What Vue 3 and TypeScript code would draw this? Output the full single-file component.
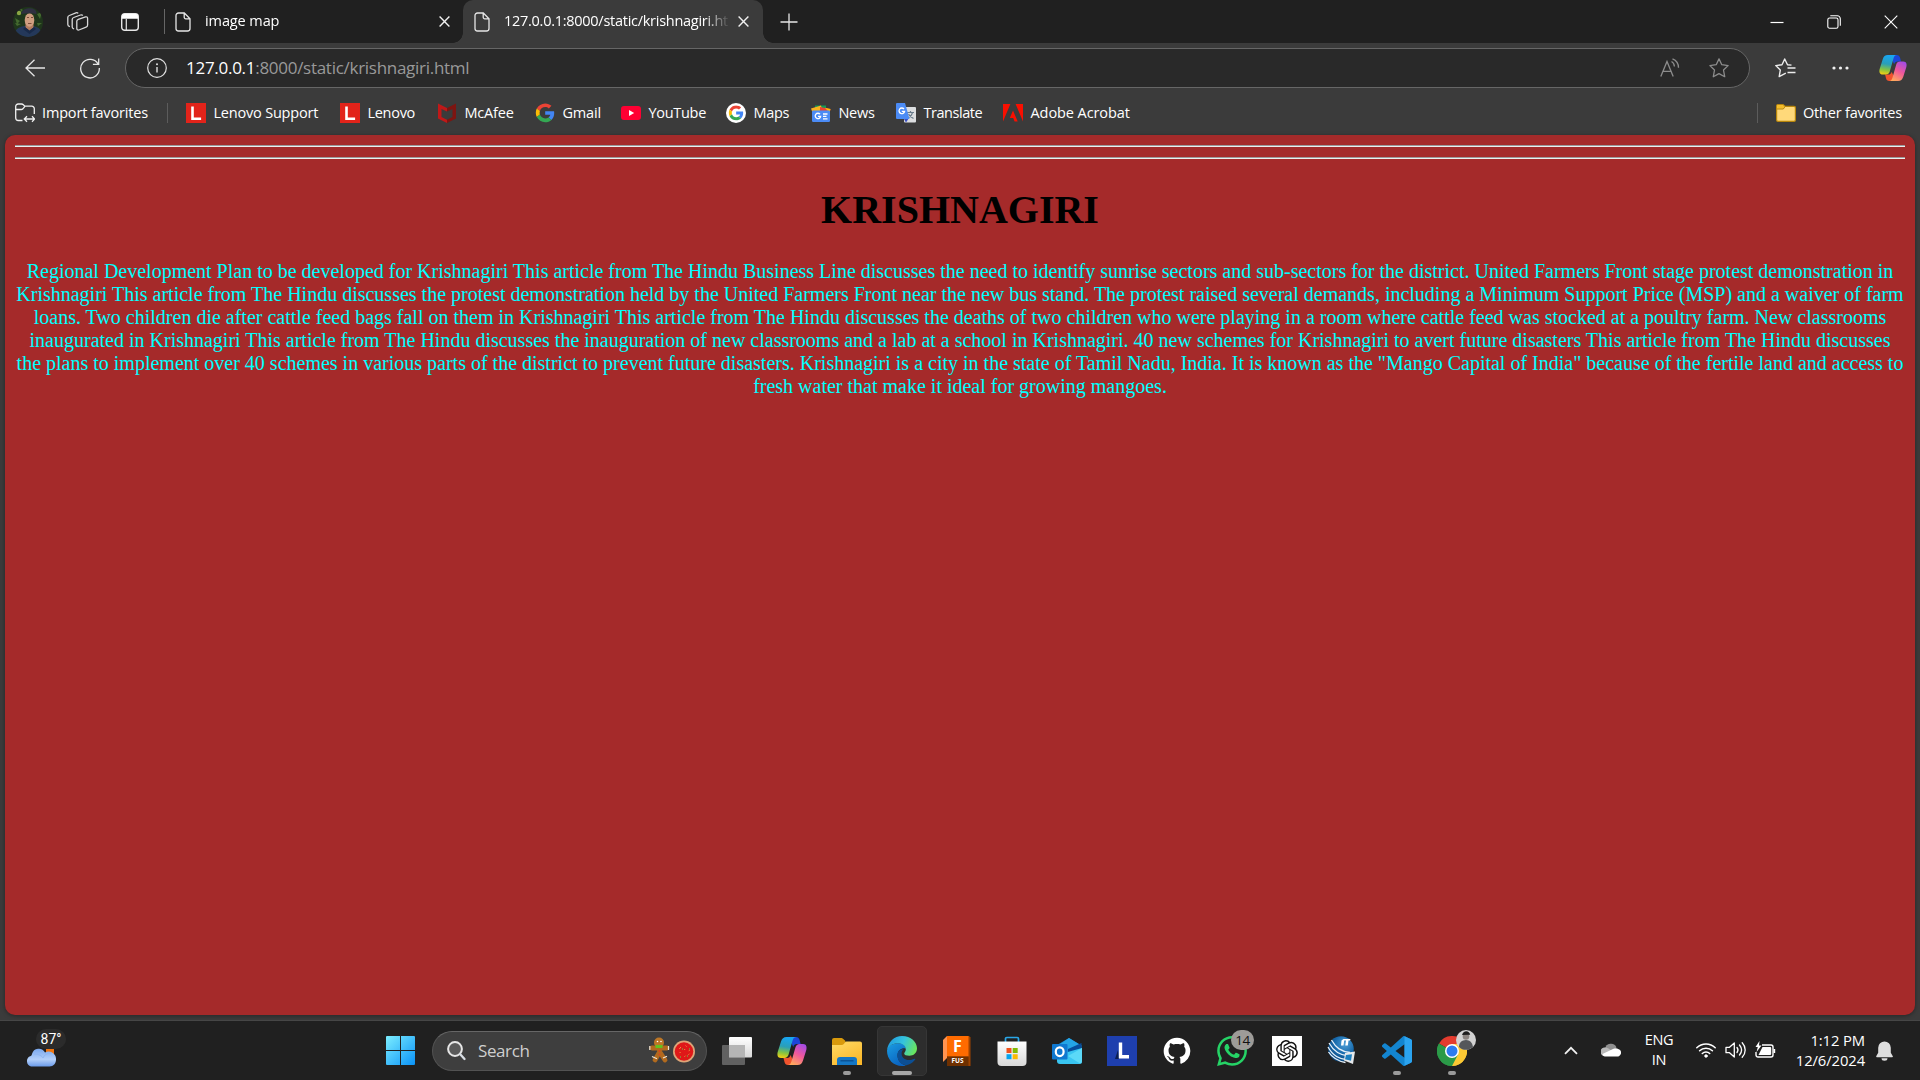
<script setup lang="ts">
interface Favorite {
  icon: string
  label: string
  width: number
  spacing: number
}

interface TaskApp {
  icon: string
  state?: 'open' | 'active'
  badge?: string
}

const favorites: Favorite[] = [
  { icon: 'lenovo', label: 'Lenovo Support', width: 154, spacing: -0.2 },
  { icon: 'lenovo', label: 'Lenovo', width: 97, spacing: -0.3 },
  { icon: 'mcafee', label: 'McAfee', width: 98, spacing: -0.2 },
  { icon: 'google', label: 'Gmail', width: 86, spacing: -0.2 },
  { icon: 'youtube', label: 'YouTube', width: 105, spacing: -0.3 },
  { icon: 'maps', label: 'Maps', width: 85, spacing: -0.3 },
  { icon: 'news', label: 'News', width: 85, spacing: -0.3 },
  { icon: 'translate', label: 'Translate', width: 107, spacing: -0.45 },
  { icon: 'acrobat', label: 'Adobe Acrobat', width: 130, spacing: -0.08 },
]

const apps: TaskApp[] = [
  { icon: 'taskview' },
  { icon: 'copilot' },
  { icon: 'explorer', state: 'open' },
  { icon: 'edge', state: 'active' },
  { icon: 'fusion' },
  { icon: 'store' },
  { icon: 'outlook' },
  { icon: 'lapp' },
  { icon: 'github' },
  { icon: 'whatsapp', badge: '14' },
  { icon: 'openai' },
  { icon: 'globe' },
  { icon: 'vscode', state: 'open' },
  { icon: 'chrome', state: 'open' },
]

const article =
  'Regional Development Plan to be developed for Krishnagiri This article from The Hindu Business Line discusses the need to identify sunrise sectors and sub-sectors for the district. United Farmers Front stage protest demonstration in Krishnagiri This article from The Hindu discusses the protest demonstration held by the United Farmers Front near the new bus stand. The protest raised several demands, including a Minimum Support Price (MSP) and a waiver of farm loans. Two children die after cattle feed bags fall on them in Krishnagiri This article from The Hindu discusses the deaths of two children who were playing in a room where cattle feed was stocked at a poultry farm. New classrooms inaugurated in Krishnagiri This article from The Hindu discusses the inauguration of new classrooms and a lab at a school in Krishnagiri. 40 new schemes for Krishnagiri to avert future disasters This article from The Hindu discusses the plans to implement over 40 schemes in various parts of the district to prevent future disasters. Krishnagiri is a city in the state of Tamil Nadu, India. It is known as the "Mango Capital of India" because of the fertile land and access to fresh water that make it ideal for growing mangoes.'
</script>

<template>
  <div class="screen">
    <svg class="sprite" width="0" height="0" aria-hidden="true">
      <defs>
        <linearGradient id="cpA" x1="0.4" y1="0" x2="0.25" y2="1">
          <stop offset="0" stop-color="#18a5f2" /><stop offset="0.45" stop-color="#2a9fb8" />
          <stop offset="0.75" stop-color="#86c440" /><stop offset="1" stop-color="#f7cf12" />
        </linearGradient>
        <linearGradient id="cpB" x1="0.8" y1="0" x2="0.3" y2="1">
          <stop offset="0" stop-color="#a34be6" /><stop offset="0.5" stop-color="#f0589a" /><stop offset="1" stop-color="#ffa95c" />
        </linearGradient>
        <linearGradient id="edA" x1="0" y1="0.3" x2="1" y2="0.6">
          <stop offset="0" stop-color="#1f9ae0" /><stop offset="0.5" stop-color="#35c3dd" /><stop offset="1" stop-color="#6be65a" />
        </linearGradient>
        <linearGradient id="edB" x1="0" y1="0" x2="0.6" y2="1">
          <stop offset="0" stop-color="#1b9de2" /><stop offset="1" stop-color="#0a63c0" />
        </linearGradient>
        <linearGradient id="winG" x1="0" y1="0" x2="1" y2="1">
          <stop offset="0" stop-color="#7ceeff" /><stop offset="1" stop-color="#0a92f7" />
        </linearGradient>
        <linearGradient id="foG" x1="0" y1="0" x2="0.6" y2="1">
          <stop offset="0" stop-color="#ffdb66" /><stop offset="1" stop-color="#fbb92c" />
        </linearGradient>
        <linearGradient id="whG" x1="0" y1="0" x2="0" y2="1">
          <stop offset="0" stop-color="#fff" /><stop offset="1" stop-color="#d8d8d8" />
        </linearGradient>
        <linearGradient id="clG" x1="0" y1="0" x2="0" y2="1">
          <stop offset="0" stop-color="#7aa8ee" /><stop offset="0.6" stop-color="#b3d0fa" /><stop offset="1" stop-color="#6b9bea" />
        </linearGradient>
        <radialGradient id="glG" cx="0.65" cy="0.3" r="0.8">
          <stop offset="0" stop-color="#4ea0d8" /><stop offset="0.5" stop-color="#1769ab" /><stop offset="1" stop-color="#0c4478" />
        </radialGradient>
      </defs>

      <symbol id="page" viewBox="0 0 16 20">
        <path d="M1 3.500a2.500 2.500 0 0 1 2.500-2.500H9.300L15 6.700V16.500A2.500 2.500 0 0 1 12.500 19h-9A2.500 2.500 0 0 1 1 16.500zM9.200 1.200V5.300a1.500 1.500 0 0 0 1.500 1.500h4.100" fill="none" stroke="#e6e6e6" stroke-width="1.300" />
      </symbol>
      <symbol id="lenovo" viewBox="0 0 20 20">
        <path d="M0 0h20v20H0z" fill="#e2231a" /><path d="M6.500 3.500v12.300h8.600" fill="none" stroke="#fff" stroke-width="2.600" />
      </symbol>
      <symbol id="mcafee" viewBox="0 0 20 20">
        <path d="M1 .5 10 5v3.500L4.500 6v8L10 16.800V20L1 15.500z" fill="#c01818" />
        <path d="M19 .5 10 5v3.500L15.500 6v8L10 16.800V20l9-4.500z" fill="#7d1511" />
      </symbol>
      <symbol id="google" viewBox="-2 -1 51 51">
        <path fill="#ea4335" d="M24 9.500c3.540 0 6.710 1.220 9.210 3.600l6.850-6.850C35.900 2.380 30.470 0 24 0 14.620 0 6.510 5.380 2.560 13.220l7.980 6.190C12.430 13.720 17.740 9.500 24 9.500z" />
        <path fill="#4285f4" d="M46.980 24.550c0-1.570-.15-3.090-.38-4.550H24v9.020h12.940c-.58 2.960-2.260 5.480-4.780 7.180l7.730 6c4.510-4.180 7.090-10.360 7.090-17.650z" />
        <path fill="#fbbc05" d="M10.530 28.590c-.48-1.450-.76-2.990-.76-4.590s.27-3.140.76-4.590l-7.980-6.190C.92 16.460 0 20.120 0 24c0 3.880.92 7.540 2.560 10.780l7.970-6.190z" />
        <path fill="#34a853" d="M24 48c6.480 0 11.930-2.130 15.890-5.810l-7.730-6c-2.150 1.450-4.920 2.300-8.160 2.300-6.260 0-11.570-4.220-13.470-9.910l-7.980 6.190C6.510 42.620 14.620 48 24 48z" />
      </symbol>
      <symbol id="youtube" viewBox="0 0 20 20">
        <rect y="3" width="20" height="14" rx="3" fill="#ff0033" /><path d="M8 7v6l5.200-3z" fill="#fff" />
      </symbol>
      <symbol id="maps" viewBox="0 0 20 20">
        <circle cx="10" cy="10" r="10" fill="#fff" /><use href="#google" x="2.200" y="2.200" width="15.600" height="15.600" />
      </symbol>
      <symbol id="news" viewBox="0 0 20 20">
        <path d="M4 2.500h11v6H4z" fill="#0f9d58" /><path d="m0 5.500 10-3 2 8-9 3z" fill="#f9b31f" /><path d="m9 4 10.500 2-1.500 7-9-2z" fill="#ea4335" />
        <path d="m14 4.700 5.500 1.300-1 4z" fill="#fbbc04" />
        <rect x="1" y="7.500" width="18" height="11.500" rx="1.200" fill="#4b8bf5" />
        <path d="M9 11.200a2.700 2.700 0 1 0 .6 2.200H7M12 11h4.500M12 13.400h3.500M12 15.800h4.500" fill="none" stroke="#fff" stroke-width="1.300" />
      </symbol>
      <symbol id="translate" viewBox="0 0 20 20">
        <rect x="8" y="4" width="12" height="15.500" rx="1" fill="#dcdee0" />
        <path d="M11 9.500h7M14.500 8v1.500M16.500 9.500c-.5 2.500-2.500 4.500-4.500 5.500M12.500 11c1 2 3 3.500 5 4.500" stroke="#697c8c" stroke-width="1.200" fill="none" />
        <path d="m8 16 5-1-3 4.500z" fill="#3a4fc4" /><path d="M1 0h8l4.500 16H1a1 1 0 0 1-1-1V1a1 1 0 0 1 1-1z" fill="#4b8bf5" />
        <path d="M8 6a2.800 2.800 0 1 0 .6 2.400H5.800" fill="none" stroke="#fff" stroke-width="1.300" />
      </symbol>
      <symbol id="acrobat" viewBox="0 0 20 20">
        <path d="M0 1h7.400L0 18.500zM12.600 1H20v17.500zM10 7.400l4.700 11.100h-3.100l-1.400-3.500H6.800z" fill="#fa0f00" />
      </symbol>
      <symbol id="copilot" viewBox="0 0 30 30">
        <path d="M12 1h7c2 0 3 1.200 3.600 3l1 4h-3.600c-2.200 0-3 .8-3.800 3z" fill="#1c45d8" />
        <path d="M18 29h-7c-2 0-3-1.200-3.500-3l-1-4H10c2 0 3-1 3.600-3z" fill="#f0532d" />
        <path d="M9.500 1H19c-2 .3-2.800 1.500-3.400 3.500l-4 14c-.7 2.300-2 3.500-4.300 3.500H4C.5 22 0 19 .7 16L4 5.500C5 2.500 6.500 1 9.500 1z" fill="url(#cpA)" />
        <path d="M20.500 29H11c2-.3 2.800-1.500 3.400-3.500l4-14c.7-2.300 2-3.500 4.300-3.500H26c3.500 0 4 3 3.300 6L26 24.500c-1 3-2.500 4.500-5.500 4.500z" fill="url(#cpB)" />
      </symbol>

      <symbol id="taskview" viewBox="0 0 30 30">
        <rect x="7" y="1" width="23" height="20.500" rx="1" fill="url(#whG)" />
        <rect x="0" y="9" width="23" height="20" rx="1" fill="#6d6d6d" fill-opacity=".85" /><path d="M7 9h16v12.500H7z" fill="#b5b5b5" />
      </symbol>
      <symbol id="explorer" viewBox="0 0 30 30">
        <path d="M0 4a2 2 0 0 1 2-2h7c1 0 1.500.3 2 .8L13.500 5v5H0z" fill="#d99a0c" />
        <path d="M0 9h9.500c1 0 1.700-.3 2.300-1L13 6.500c.6-.8 1-1 2-1h13a2 2 0 0 1 2 2V29H0z" fill="url(#foG)" />
        <path d="M5 29v-5a3 3 0 0 1 3-3h14a3 3 0 0 1 3 3v5z" fill="#1577c5" /><path d="M8.500 24.800h13" stroke="#0b4f8f" stroke-width="1.300" />
      </symbol>
      <symbol id="edge" viewBox="0 0 30 30">
        <path d="M0 14.500C1.500 9.500 6 7.200 11.500 7.200c4.500 0 7.500 2.300 7.500 5.500-3-1.500-8.500.8-8.500 6.800 0 5 4 9.300 8.500 9.900-1.300.4-2.500.6-4 .6C6.500 30 0 23.500 0 14.500z" fill="url(#edB)" />
        <path d="M11 16c-2.200 5.500 1.500 13 8.500 13.300 4.200-1 7-3.300 8.700-5.800.4-.7-.2-1-.8-.7-7 3.300-12.800-.3-12.800-5 0-2.200.8-3.700 2.200-4.500-2.500-.4-4.800.7-5.800 2.700z" fill="#0c4f94" />
        <path d="M0 14.500C.8 6 7.300 0 15 0c9 0 15 6 15 12.300 0 5-3.600 7.400-7.600 7.400-3.200 0-5.200-1-5.200-2.300 0-1 1.600-1.600 1.600-4.200 0-3.600-3.500-6-7.600-6C6 7.200 2 9.700 0 14.500z" fill="url(#edA)" />
      </symbol>
      <symbol id="fusion" viewBox="0 0 30 30">
        <path d="M5 0h22l1.500 1.500V30H5z" fill="#9d4300" /><path d="M1 4 5 0v22l-4 4z" fill="#ff9350" />
        <path d="M5 0h21.500v20.500H5z" fill="#ff6b00" /><path d="M5 20.500h21.500V30H5z" fill="#6f3000" />
      </symbol>
      <symbol id="store" viewBox="0 0 30 30">
        <path d="M8.500 7V2.800C8.500 2 9 1.500 9.800 1.500h10.400c.8 0 1.300.5 1.300 1.300V7" fill="none" stroke="#29a7e8" stroke-width="1.700" />
        <path d="M.5 5.500h29V26a4 4 0 0 1-4 4h-21a4 4 0 0 1-4-4z" fill="url(#whG)" />
        <path d="M9.500 12h5v5h-5z" fill="#f1511b" /><path d="M15.700 12h5v5h-5z" fill="#80bb03" /><path d="M9.500 18.200h5v5h-5z" fill="#05a4ef" /><path d="M15.700 18.200h5v5h-5z" fill="#fbb902" />
      </symbol>
      <symbol id="outlook" viewBox="0 0 30 30">
        <path d="M5 9 17 2l12.500 7.500V14L17 20 5 14z" fill="#1686cf" /><path d="M17 2 29.500 9.800 16 17 7 9z" fill="#24a5e6" />
        <path d="m16 13 13.500-6V14L16 22z" fill="#064d9b" /><path d="M5 19 30 12v13.500a2.500 2.500 0 0 1-2.500 2.500H8a3 3 0 0 1-3-3z" fill="#39c5f1" />
        <path d="m30 12-14 8 12 7.500a2.500 2.500 0 0 0 2-2.500z" fill="#5bd9f8" />
        <rect y="8" width="15.500" height="15.500" rx="1" fill="#0f78d0" /><ellipse cx="7.700" cy="15.700" rx="3.900" ry="4.400" fill="none" stroke="#fff" stroke-width="2.200" />
      </symbol>
      <symbol id="lapp" viewBox="0 0 30 30">
        <path d="M0 0h30v30H0z" fill="#1e3fae" /><path d="m11 14-3 9h4z" fill="#0b1f52" />
        <path d="M13.500 6.500v14.300H22" fill="none" stroke="#fff" stroke-width="3.400" />
      </symbol>
      <symbol id="github" viewBox="-1 -1 18 18">
        <path fill="#fff" d="M8 0C3.580 0 0 3.580 0 8c0 3.540 2.290 6.530 5.470 7.590.4.07.55-.17.55-.38 0-.19-.01-.82-.01-1.490-2.010.37-2.530-.49-2.690-.94-.09-.23-.48-.94-.82-1.130-.28-.15-.68-.52-.01-.53.63-.01 1.080.58 1.230.82.72 1.210 1.870.87 2.330.66.07-.52.28-.87.51-1.070-1.780-.2-3.640-.89-3.640-3.950 0-.87.31-1.590.82-2.150-.08-.2-.36-1.020.08-2.120 0 0 .67-.21 2.200.82.64-.18 1.320-.27 2-.27s1.360.09 2 .27c1.530-1.040 2.200-.82 2.200-.82.44 1.100.16 1.920.08 2.120.51.56.82 1.270.82 2.150 0 3.070-1.870 3.750-3.650 3.950.29.25.54.73.54 1.480 0 1.070-.01 1.930-.01 2.200 0 .21.15.46.55.38A8.010 8.010 0 0 0 16 8c0-4.420-3.580-8-8-8z" />
      </symbol>
      <symbol id="whatsapp" viewBox="0 0 24 24">
        <path fill="#25d366" d="M17.472 14.382c-.297-.149-1.758-.867-2.030-.967-.273-.099-.471-.148-.67.15-.197.297-.767.966-.94 1.164-.173.199-.347.223-.644.075-.297-.15-1.255-.463-2.390-1.475-.883-.788-1.480-1.761-1.653-2.059-.173-.297-.018-.458.13-.606.134-.133.298-.347.446-.52.149-.174.198-.298.298-.497.099-.198.05-.371-.025-.52-.075-.149-.669-1.612-.916-2.207-.242-.579-.487-.5-.669-.51-.173-.008-.371-.01-.57-.01-.198 0-.52.074-.792.372-.272.297-1.040 1.016-1.040 2.479 0 1.462 1.065 2.875 1.213 3.074.149.198 2.096 3.200 5.077 4.487.709.306 1.262.489 1.694.625.712.227 1.360.195 1.871.118.571-.085 1.758-.719 2.006-1.413.248-.694.248-1.289.173-1.413-.074-.124-.272-.198-.57-.347m-5.421 7.403h-.004a9.870 9.870 0 0 1-5.031-1.378l-.361-.214-3.741.982.998-3.648-.235-.374a9.860 9.860 0 0 1-1.510-5.260c.001-5.450 4.436-9.884 9.888-9.884 2.640 0 5.122 1.030 6.988 2.898a9.825 9.825 0 0 1 2.893 6.994c-.003 5.450-4.437 9.884-9.885 9.884m8.413-18.297A11.815 11.815 0 0 0 12.050 0C5.495 0 .16 5.335.157 11.892c0 2.096.547 4.142 1.588 5.945L.057 24l6.305-1.654a11.882 11.882 0 0 0 5.683 1.448h.005c6.554 0 11.890-5.335 11.893-11.893a11.821 11.821 0 0 0-3.480-8.413z" />
      </symbol>
      <symbol id="openai" viewBox="0 0 33 33">
        <path d="M0 0h33v33H0z" fill="#fff" />
        <path transform="translate(4.500 4.500)" fill="#111" d="M22.282 9.821a5.985 5.985 0 0 0-.516-4.911 6.046 6.046 0 0 0-6.510-2.900A6.065 6.065 0 0 0 4.981 4.182a5.985 5.985 0 0 0-3.998 2.900 6.046 6.046 0 0 0 .743 7.097 5.980 5.980 0 0 0 .511 4.911 6.051 6.051 0 0 0 6.515 2.900A5.985 5.985 0 0 0 13.260 24a6.056 6.056 0 0 0 5.772-4.206 5.989 5.989 0 0 0 3.998-2.900 6.056 6.056 0 0 0-.748-7.073zm-9.022 12.608a4.476 4.476 0 0 1-2.876-1.041l.142-.080 4.778-2.758a.795.795 0 0 0 .393-.681v-6.737l2.020 1.169a.071.071 0 0 1 .038.052v5.583a4.504 4.504 0 0 1-4.495 4.494zm-9.661-4.125a4.471 4.471 0 0 1-.535-3.014l.142.085 4.783 2.758a.771.771 0 0 0 .781 0l5.843-3.369v2.332a.080.080 0 0 1-.033.062L9.740 19.950a4.499 4.499 0 0 1-6.141-1.646zM2.341 7.896a4.485 4.485 0 0 1 2.366-1.973V11.600a.766.766 0 0 0 .388.677l5.814 3.354-2.020 1.169a.076.076 0 0 1-.071 0l-4.830-2.787A4.504 4.504 0 0 1 2.341 7.872zm16.596 3.856L13.104 8.364 15.119 7.200a.076.076 0 0 1 .071 0l4.830 2.791a4.494 4.494 0 0 1-.677 8.104v-5.677a.790.790 0 0 0-.407-.667zm2.011-3.023l-.142-.085-4.774-2.782a.776.776 0 0 0-.785 0L9.409 9.230V6.897a.066.066 0 0 1 .028-.062l4.830-2.787a4.499 4.499 0 0 1 6.680 4.660zM8.307 12.863l-2.020-1.164a.080.080 0 0 1-.038-.057V6.074a4.499 4.499 0 0 1 7.376-3.454l-.142.081L8.704 5.459a.795.795 0 0 0-.393.681zm1.098-2.365l2.602-1.500 2.607 1.500v2.999l-2.597 1.500-2.607-1.500Z" />
      </symbol>
      <symbol id="globe" viewBox="0 0 30 30">
        <circle cx="14" cy="13" r="12.800" fill="url(#glG)" />
        <path d="M1 11c5 9 11 12 20 13M2 7c5 9 11 12.500 20 13M4.500 4C9 12 14 15.500 23 16.500M1.500 16c4 6 9 9 17 10.500" fill="none" stroke="#e8f2fa" stroke-width="1.300" />
        <path d="m16.500 3-2 1.500-.5 5h2.500l.7-5h1.800l-.7 5h2.500l.7-5H23l.5-1.500z" fill="#fff" />
        <path d="m18 17 10-1.500-2 12.500-9-3.500z" fill="#e4e8eb" /><path d="m19 19 6-.8-1 6.500-6-1.500z" fill="#1b7fc0" />
      </symbol>
      <symbol id="vscode" viewBox="0 0 24 24">
        <path fill="#1385d0" d="M23.150 2.587L18.210.21a1.494 1.494 0 0 0-1.705.29l-9.460 8.630-4.120-3.128a.999.999 0 0 0-1.276.057L.327 7.261A1 1 0 0 0 .326 8.740L3.899 12 .326 15.260a1 1 0 0 0 .001 1.479L1.650 17.940a.999.999 0 0 0 1.276.057l4.120-3.128 9.460 8.630a1.492 1.492 0 0 0 1.704.29l4.942-2.377A1.500 1.500 0 0 0 24 20.060V3.939a1.500 1.500 0 0 0-.85-1.352zm-5.146 14.861L10.826 12l7.178-5.448v10.896z" />
        <path fill="#2ba4f0" d="M18 .2l5.150 2.387A1.500 1.500 0 0 1 24 3.939V20.060a1.500 1.500 0 0 1-.85 1.352L18 23.800z" />
      </symbol>
      <symbol id="chrome" viewBox="0 0 30 30">
        <path d="M15 15 2 7.500A15 15 0 0 1 28 7.500z" fill="#e33b2e" /><path d="M15 15 28 7.500A15 15 0 0 1 15 30z" fill="#fcc934" />
        <path d="M15 15 15 30A15 15 0 0 1 2 7.500z" fill="#2b9a48" />
        <path d="M15 8h13.300A15 15 0 0 1 15 30l6-11.500z" fill="#fcc934" /><path d="M2 7.500 9 18.500l12 0L15 30A15 15 0 0 1 2 7.500z" fill="#2b9a48" />
        <circle cx="15" cy="15" r="7" fill="#fff" /><circle cx="15" cy="15" r="5.500" fill="#2d7bf0" />
      </symbol>
    </svg>

    <header class="tabs">
      <svg class="avatar" viewBox="0 0 30 30" width="30" height="30">
        <clipPath id="face"><circle cx="15" cy="15" r="15" /></clipPath>
        <g clip-path="url(#face)">
          <path d="M0 0h30v30H0z" fill="#1f361b" />
          <path d="M2 11l5 3-3 3zM24 7l5-2-2 7zM2 16l6 1-4 2zM24 16l5 0-4 3zM7 1l3 2-2 2z" fill="#44692f" /><circle cx="6" cy="6" r="2.200" fill="#8aa544" />
          <path d="M1 30c0-7 4-10 10-11h9c6 1 9 4 9 11z" fill="#24385a" />
          <path d="M12.500 16h8v4.500l-4 3.500-4-3.500z" fill="#b17c5e" /><ellipse cx="16.500" cy="13" rx="4.800" ry="6.800" fill="#cf9e80" />
          <path d="M14 10.500h2m2 0h2M15 16.500h3.500" stroke="#7b4d3b" stroke-width="1" />
          <path d="M8 7C9.500 2 14 .8 18 1.200c3.800.4 6 2.800 5.400 6-3-1.200-9.500-1.500-15.400-.2z" fill="#2f3040" />
          <path d="m12 20 4.500 3.500L21 20l2 2-6.500 5L10 22z" fill="#192a49" />
        </g>
      </svg>
      <svg class="ic-work" width="22" height="22" viewBox="0 0 22 22" fill="none" stroke="#d8d8d8" stroke-width="1.300">
        <path d="M9.800 10.300c0-1 .6-1.700 1.500-2l7.200-2.400c1.200-.4 2.100.3 2.100 1.500v6.700c0 1-.6 1.800-1.500 2.100l-7.200 2.800c-1.200.4-2.100-.3-2.100-1.500z" />
        <path d="M7 18 6.200 17.500c-.7-.3-1-.9-1-1.700V8.500c0-1 .6-1.700 1.500-2L13.500 4c1-.3 1.700-.2 2.300.5" />
        <path d="M2.900 15.700C1.600 15.300.8 14.600.8 13.500V6.500c0-1 .6-1.700 1.500-2l6.600-2.700c1-.3 1.700-.2 2.300.5" />
      </svg>
      <svg class="ic-acts" width="18" height="18" viewBox="0 0 18 18">
        <rect x=".7" y=".7" width="16.600" height="16.600" rx="3" fill="none" stroke="#e6e6e6" stroke-width="1.400" />
        <path d="M1 3a2 2 0 0 1 2-2h12a2 2 0 0 1 2 2v2.800H1z" fill="#fff" /><path d="M5.300 6v11" stroke="#e6e6e6" stroke-width="1.200" />
      </svg>
      <i class="tab-sep"></i>
      <div class="tab">
        <svg class="page" width="16" height="20"><use href="#page" /></svg>
        <span class="tab-title first">image map</span>
        <svg class="close" width="11" height="11" viewBox="0 0 11 11"><path d="m.6.6 9.800 9.800m0-9.800L.6 10.400" stroke="#f0f0f0" stroke-width="1.400" /></svg>
      </div>
      <div class="tab current">
        <svg class="page" width="16" height="20"><use href="#page" /></svg>
        <span class="tab-title">127.0.0.1:8000/static/krishnagiri.html</span>
        <svg class="close" width="11" height="11" viewBox="0 0 11 11"><path d="m.6.6 9.800 9.800m0-9.800L.6 10.400" stroke="#f0f0f0" stroke-width="1.400" /></svg>
      </div>
      <svg class="plus" width="18" height="18" viewBox="0 0 18 18"><path d="M9 .5v17M.5 9h17" stroke="#e6e6e6" stroke-width="1.300" /></svg>
      <div class="window-buttons">
        <svg width="14" height="14" viewBox="0 0 14 14"><path d="M.5 7.500h13" stroke="#fff" stroke-width="1.200" /></svg>
        <svg width="14" height="14" viewBox="0 0 14 14" fill="none" stroke="#fff" stroke-width="1.100"><rect x=".8" y="3" width="10.200" height="10.200" rx="1.800" /><path d="M3.300.8h7a3 3 0 0 1 3 3v7" /></svg>
        <svg width="14" height="14" viewBox="0 0 14 14"><path d="m.7.7 12.600 12.600m0-12.600L.7 13.300" stroke="#fff" stroke-width="1.100" /></svg>
      </div>
    </header>

    <div class="toolbar">
      <svg class="back" width="20" height="18" viewBox="0 0 20 18"><path d="M9.500.8 1 9l8.500 8.200M1 9h19" fill="none" stroke="#e6e6e6" stroke-width="1.300" /></svg>
      <svg class="reload" width="20" height="22" viewBox="0 0 20 22"><path d="M18.200 7.200A9.300 9.300 0 1 0 19.300 11M18.700 1.500v5.800h-5.800" fill="none" stroke="#e6e6e6" stroke-width="1.300" /></svg>
      <div class="address">
        <svg class="info" width="20" height="20" viewBox="0 0 20 20"><circle cx="10" cy="10" r="9.300" fill="none" stroke="#e0e0e0" stroke-width="1.200" /><path d="M10 9v5.500" stroke="#e0e0e0" stroke-width="1.400" /><circle cx="10" cy="6.200" r="1" fill="#e0e0e0" /></svg>
        <span class="url"><b>127.0.0.1</b>:8000/static/krishnagiri.html</span>
        <svg class="read" width="20" height="20" viewBox="0 0 20 20" fill="none" stroke="#8c8c8c" stroke-width="1.300"><path d="M.8 18.500 7 3.500l6.200 15M3 13.300h8M11.500 3.500c1.800 1 2.800 2.700 2.900 5M12.500.8c3.800 1.500 6 4.500 6 8.900" /></svg>
        <svg class="star" width="20" height="20" viewBox="0 0 20 20"><path d="m10 .9 2.800 5.800 6.300.9-4.600 4.400 1.200 6.700L10 15.600l-5.700 3.100 1.200-6.700L.9 7.600l6.300-.9z" fill="none" stroke="#8c8c8c" stroke-width="1.300" stroke-linejoin="round" /></svg>
      </div>
      <svg class="favs" width="21" height="20" viewBox="0 0 21 20" fill="none" stroke="#ececec" stroke-width="1.400" stroke-linejoin="round"><path d="M10.500 15.500 9.700 15.700 4.200 18.600l1.100-6.500L.8 7.600l6.200-.9L9.700 1l2.800 5.700 3.500.5M12 10.200h8.500M13.500 14.500h7M13.500 7.300 20.500 10.200" stroke="none" /><path d="M10.800 15.200 4.200 18.600l1.100-6.500L.8 7.600l6.200-.9L9.700 1l2.800 5.700 4 .4M12.500 10h8M12.500 14.500h8" /></svg>
      <svg class="dots" width="17" height="4" viewBox="0 0 17 4" fill="#f0f0f0"><circle cx="2" cy="2" r="1.600" /><circle cx="8.500" cy="2" r="1.600" /><circle cx="15" cy="2" r="1.600" /></svg>
      <svg class="cop" width="28" height="28"><use href="#copilot" /></svg>
    </div>

    <nav class="favorites">
      <svg class="import" width="20" height="20" viewBox="0 0 20 20" fill="none" stroke="#f0f0f0" stroke-width="1.300"><path d="M7.500 17.500H3.300A2.600 2.600 0 0 1 .7 15V3.500A2.500 2.500 0 0 1 3.200 1h3.300c.8 0 1.300.2 1.800.7l1.500 1.500h7a2.500 2.500 0 0 1 2.500 2.500V11M.7 6.500h5.500c.7 0 1.200-.2 1.700-.7l2-2.500M9.500 16h10M12 13.300 9.300 16l2.700 2.700M17 13.300l2.700 2.700-2.700 2.700" /></svg>
      <span class="label import-label">Import favorites</span>
      <i class="sep"></i>
      <div v-for="fav in favorites" :key="fav.label" class="fav" :style="{ width: fav.width + 'px' }">
        <svg width="20" height="20"><use :href="'#' + fav.icon" /></svg>
        <span class="label" :style="{ letterSpacing: fav.spacing + 'px' }">{{ fav.label }}</span>
      </div>
      <div class="other">
        <i class="sep"></i>
        <svg width="20" height="18" viewBox="0 0 20 18"><path d="M.6 2A1.400 1.400 0 0 1 2 .6h5L9 2.300h9A1.400 1.400 0 0 1 19.400 3.700V16A1.400 1.400 0 0 1 18 17.400H2A1.400 1.400 0 0 1 .6 16z" fill="#ffd97a" stroke="#b8860b" stroke-width="1.200" /><path d="M1.200 1.200H7L8.500 2.500 7 4.700H1.200z" fill="#f5bd27" /><path d="M1 5h6.300L9 2.700" stroke="#b8860b" fill="none" /></svg>
        <span class="label">Other favorites</span>
      </div>
    </nav>

    <main class="page-view">
      <hr />
      <hr />
      <h1>KRISHNAGIRI</h1>
      <p>{{ article }}</p>
    </main>

    <footer class="taskbar">
      <div class="weather">
        <svg width="30" height="22" viewBox="0 0 30 22"><path d="M20 4h8v8h-8z" fill="#f0740e" /><path d="M5 21.500a5.500 5.500 0 0 1-1-10.200C5.500 10.800 5.500 10.500 6 9a7 7 0 0 1 13-1.500A7.500 7.500 0 0 1 30 14.500c0 4-2.500 7-6.500 7z" fill="url(#clG)" /><path d="M8 9c5 0 8 2 9 4 1-3 4-5 8-5" fill="none" stroke="#8fb6f3" /></svg>
        <span>87°</span>
      </div>
      <svg class="start" width="29" height="29" viewBox="0 0 29 29"><path d="M0 1a1 1 0 0 1 1-1h13v14H0zM15 0h13a1 1 0 0 1 1 1v13H15zM0 15h14v14H1a1 1 0 0 1-1-1zM15 15h14v13a1 1 0 0 1-1 1H15z" fill="url(#winG)" /></svg>
      <div class="search">
        <svg width="19" height="20" viewBox="0 0 19 20"><circle cx="8" cy="8" r="6.900" fill="#5a5a5a" stroke="#e6e6e6" stroke-width="2" /><path d="m13 13 4.500 5" stroke="#d8dde4" stroke-width="2.300" stroke-linecap="round" /></svg>
        <span>Search</span>
        <svg class="cookies" width="46" height="27" viewBox="0 0 46 27">
          <path d="M10.500 8v9M3 11h15M10 16l-4 7M11.500 16l4.500 7" stroke="#b16a1e" stroke-width="4.800" stroke-linecap="round" fill="none" /><circle cx="10" cy="5.500" r="5" fill="#bd7626" />
          <path d="M6.500 9.500h7" stroke="#62c21e" stroke-width="3" /><path d="m3 19.500 5 2.200M14 21l4-1.800M.8 9v4M19.500 9v4" stroke="#f0e5d4" stroke-width="1.200" />
          <circle cx="8.500" cy="4.500" r=".8" fill="#fff" /><circle cx="12" cy="4.500" r=".8" fill="#fff" /><circle cx="10.500" cy="14" r="1" fill="#e0431d" /><circle cx="10.500" cy="17.500" r="1" fill="#e0431d" />
          <circle cx="35" cy="14.500" r="11" fill="#dda578" /><circle cx="35" cy="14.500" r="9.300" fill="#df1818" />
          <path d="m31 10 .7.7m5-2 .7.7m3 4-.7.7m-9 1 .7.7m5 3-.7.7m4-2 .7-.7m-5-4 .7-.7m-5-1-.7.7" stroke="#ffc34d" stroke-width="1" /><path d="m33 12 1 0m4 7 1 0m-8 1 1 0m8-8 1 0" stroke="#4ddb52" stroke-width="1" />
        </svg>
      </div>
      <div class="apps">
        <div v-for="app in apps" :key="app.icon" class="app" :class="app.state">
          <svg width="30" height="30"><use :href="'#' + app.icon" /></svg>
          <span v-if="app.badge" class="badge">{{ app.badge }}</span>
          <template v-if="app.icon === 'fusion'">
            <b class="fusion-f">F</b>
            <b class="fusion-sub">FUS</b>
          </template>
          <svg v-if="app.icon === 'chrome'" class="profile" width="20" height="20" viewBox="0 0 20 20"><circle cx="10" cy="10" r="10" fill="#d2d2d2" /><path d="M3 17c0-5 3-6.500 7-7 4 .5 6 2 7 7-4 3.500-10 4-14 0z" fill="#55575a" /><circle cx="10" cy="6.500" r="3.300" fill="#8b8480" /><path d="M6 5c1-5 7.500-5 8.200-.3z" fill="#1e1e1e" /></svg>
        </div>
      </div>
      <div class="tray">
        <svg class="chev" width="14" height="9" viewBox="0 0 14 9"><path d="m1 7.800 6-6 6 6" fill="none" stroke="#f0f0f0" stroke-width="1.800" /></svg>
        <svg class="cloud" width="20" height="14" viewBox="0 0 20 14"><path d="M4 6a6 6 0 0 1 11.500-1.500L10 9z" fill="#8f8f8f" /><path d="M3.500 13A4.300 4.300 0 0 1 3 4.500c2-.3 4 .3 5.500 1.700L16 11z" fill="#b9b9b9" /><path d="M1.500 11 12 6c2-1.200 4-1 5.200.1 2.600.6 3.800 3.500 2.200 5.600C18.500 13 17.500 13.500 16 13.500H4c-1.500 0-2.500-1-2.500-2.500z" fill="#fff" /></svg>
        <div class="lang"><span>ENG</span><span>IN</span></div>
        <svg class="wifi" width="20" height="16" viewBox="0 0 20 16" fill="none" stroke="#fff" stroke-width="1.500" stroke-linecap="round"><path d="M.8 5.800a13 13 0 0 1 18.400 0M3.600 8.800a9 9 0 0 1 12.800 0M6.300 11.500a5.300 5.300 0 0 1 7.400 0" /><circle cx="10" cy="14" r="1.300" fill="#fff" stroke-width=".8" /></svg>
        <svg class="sound" width="21" height="18" viewBox="0 0 21 18" fill="none" stroke="#fff" stroke-width="1.300" stroke-linecap="round"><path d="M1 6.300h3.500L9.300 2v14l-4.800-4.300H1z" stroke-linejoin="round" /><path d="M12 6.500c1.200 1.500 1.200 3.500 0 5M14.500 4c2.500 3 2.500 7 0 10M17.200 1.800c4 4.300 4 10 0 14.400" /></svg>
        <svg class="battery" width="21" height="17" viewBox="0 0 21 17"><path d="M7 4h9a2 2 0 0 1 2 2v8a2 2 0 0 1-2 2H3a2 2 0 0 1-2-2v-3" fill="none" stroke="#fff" stroke-width="1.400" /><path d="M7.500 6h7.800c.5 0 .9.400.9.900v6.200c0 .5-.4.9-.9.9H3.500z" fill="#fff" /><path d="M18.500 8h1.700v4h-1.700z" fill="#fff" /><path d="M4.500 0 .5 6h2.300L1.500 11 6.500 4.500H4z" fill="#fff" /></svg>
        <div class="clock"><span>1:12 PM</span><span>12/6/2024</span></div>
        <svg class="bell" width="17" height="20" viewBox="0 0 17 20"><path d="M8.500.5a6.300 6.300 0 0 1 6.300 6.300v5l2 3.500c.2.500 0 .9-.6.9H.8c-.6 0-.8-.4-.6-.9l2-3.500v-5A6.300 6.300 0 0 1 8.500.5z" fill="#dedede" /><path d="M5.500 17.200h6a3 2.500 0 0 1-6 0z" fill="#dedede" /></svg>
      </div>
    </footer>
  </div>
</template>

<style>
body {
  margin: 0;
  background: #3b3b3b;
}
</style>

<style scoped>
.screen {
  width: 1920px;
  height: 1080px;
  overflow: hidden;
  display: flex;
  flex-direction: column;
  background: #3b3b3b;
  color: #fff;
  font-family: "Open Sans", "Noto Sans", sans-serif;
}
.sprite {
  position: absolute;
}
svg {
  display: block;
  flex: none;
}

.tabs {
  height: 43px;
  flex: none;
  display: flex;
  align-items: center;
  background: #202020;
}
.avatar { margin-left: 13px; }
.ic-work { margin-left: 24px; }
.ic-acts { margin-left: 32px; }
.tab-sep {
  width: 1px;
  height: 25px;
  margin-left: 25px;
  background: #666;
}
.tab {
  width: 298px;
  height: 43px;
  box-sizing: border-box;
  padding-left: 10px;
  display: flex;
  align-items: center;
  position: relative;
}
.tab.current {
  width: 300px;
  padding-left: 11px;
  background: #3b3b3b;
  border-radius: 10px 10px 0 0;
}
.tab.current::before,
.tab.current::after {
  content: "";
  position: absolute;
  bottom: 0;
  width: 10px;
  height: 10px;
}
.tab.current::before {
  left: -10px;
  background: radial-gradient(circle at 0 0, transparent 9.500px, #3b3b3b 10px);
}
.tab.current::after {
  right: -10px;
  background: radial-gradient(circle at 100% 0, transparent 9.500px, #3b3b3b 10px);
}
.tab-title {
  width: 224px;
  margin-left: 14px;
  overflow: hidden;
  white-space: nowrap;
  font-size: 14.500px;
  line-height: 20px;
  letter-spacing: -0.27px;
  padding-bottom: 1px;
  -webkit-mask-image: linear-gradient(90deg, #000 200px, transparent 226px);
  mask-image: linear-gradient(90deg, #000 200px, transparent 226px);
}
.tab .close { margin-left: 10px; }
.tab-title.first {
  width: 220px;
  letter-spacing: -0.1px;
}
.tab:not(.current) .close { margin-left: 14px; }
.plus { margin-left: 17px; }
.window-buttons {
  display: flex;
  gap: 43px;
  margin-left: auto;
  margin-right: 22px;
}

.toolbar {
  height: 50px;
  flex: none;
  display: flex;
  align-items: center;
}
.back {
  margin-left: 25px;
  margin-bottom: 1px;
}
.reload {
  margin-left: 35px;
  margin-bottom: 1px;
}
.address {
  width: 1625px;
  height: 40px;
  box-sizing: border-box;
  margin-left: 25px;
  border: 1px solid #666;
  border-radius: 20px;
  background: #292929;
  display: flex;
  align-items: center;
}
.info { margin-left: 21px; }
.url {
  margin-left: 19px;
  padding-bottom: 1px;
  color: #999;
  font-size: 17px;
  line-height: 24px;
  letter-spacing: -0.28px;
}
.url b {
  font-weight: 400;
  color: #fff;
}
.read { margin-left: auto; }
.star {
  margin-left: 29px;
  margin-right: 20px;
}
.favs { margin-left: 25px; }
.dots {
  margin-left: 36px;
  margin-bottom: 1px;
}
.cop { margin-left: 30px; }

.favorites {
  height: 42px;
  flex: none;
  box-sizing: border-box;
  padding-bottom: 2px;
  display: flex;
  align-items: center;
}
.label {
  font-size: 14.500px;
  line-height: 20px;
  padding-bottom: 1px;
  white-space: nowrap;
  letter-spacing: -0.3px;
}
.import { margin-left: 15px; }
.import-label {
  width: 125px;
  margin-left: 7px;
  letter-spacing: -0.17px;
}
.sep {
  width: 1px;
  height: 20px;
  background: #5c5c5c;
}
.favorites > .sep { margin-right: 18px; }
.fav {
  display: flex;
  align-items: center;
  gap: 7.500px;
}
.other {
  margin-left: auto;
  width: 163px;
  display: flex;
  align-items: center;
}
.other svg {
  margin-left: 18px;
  margin-right: 7px;
}
.other .label { letter-spacing: -0.2px; }

.page-view {
  width: 1910px;
  height: 880px;
  flex: none;
  box-sizing: border-box;
  margin: 0 5px;
  padding: 10px;
  border-radius: 10px;
  background: #a52a2a;
  box-shadow: 0 1px 4px rgba(0, 0, 0, 0.35);
  font-family: "Liberation Serif", serif;
  text-align: center;
}
hr {
  height: 0;
  margin: 0 0 10px;
  border: 0;
  border-top: 1px solid #9a9a9a;
  border-bottom: 1px solid #eee;
}
h1 {
  margin: 28px 0 27px;
  color: #000;
  font-size: 40px;
  line-height: 46px;
  font-weight: 700;
}
p {
  margin: 0;
  color: #0ff;
  font-size: 20px;
  line-height: 23px;
}

.taskbar {
  height: 60px;
  flex: none;
  box-sizing: border-box;
  margin-top: 5px;
  border-top: 1px solid #464646;
  background: #202020;
  display: flex;
  align-items: center;
}
.weather {
  width: 360px;
  height: 59px;
  position: relative;
}
.weather svg {
  margin: 24px 0 0 26px;
}
.weather span {
  position: absolute;
  left: 36px;
  top: 8px;
  width: 30px;
  height: 20px;
  border-radius: 10px;
  background: #2b2b2b;
  font: 14px/21px Roboto, sans-serif;
  text-align: center;
}
.start { margin-left: 26px; }
.search {
  width: 275px;
  height: 40px;
  box-sizing: border-box;
  margin-left: 17px;
  padding: 0 11px 0 14px;
  border: 1px solid #525252;
  border-top-color: #666;
  border-radius: 20px;
  background: #3e3e3e;
  display: flex;
  align-items: center;
}
.search span {
  margin-left: 12px;
  color: #cfcfcf;
  font-size: 17px;
  line-height: 24px;
  letter-spacing: -0.4px;
}
.cookies { margin-left: auto; }
.apps {
  display: flex;
  gap: 5px;
  margin-left: 5px;
}
.app {
  width: 50px;
  height: 50px;
  box-sizing: border-box;
  display: flex;
  align-items: center;
  justify-content: center;
  border: 1px solid transparent;
  border-radius: 5px;
  position: relative;
}
.app.active {
  background: #2d2d2d;
  border-color: #363636;
}
.app.open::after,
.app.active::after {
  content: "";
  position: absolute;
  bottom: 0;
  width: 8px;
  height: 4px;
  border-radius: 2px;
  background: #9a9a9a;
}
.app.active::after {
  width: 20px;
  background: #a8a8a8;
}
.badge {
  position: absolute;
  left: 23px;
  top: 3px;
  width: 23px;
  height: 20px;
  border-radius: 10px;
  background: #9d9b98;
  color: #111;
  font-size: 13.500px;
  line-height: 20px;
  text-align: center;
  letter-spacing: -0.4px;
}
.fusion-f,
.fusion-sub {
  position: absolute;
  left: 14px;
  width: 21px;
  text-align: center;
}
.fusion-f {
  top: 9px;
  font-size: 16px;
  line-height: 20px;
}
.fusion-sub {
  top: 29px;
  font-size: 6.500px;
  line-height: 9px;
}
.profile {
  position: absolute;
  right: 0;
  top: 3px;
}
.tray {
  margin-left: auto;
  display: flex;
  align-items: center;
}
.cloud {
  margin-left: 23px;
  margin-bottom: 2px;
}
.lang,
.clock {
  display: flex;
  flex-direction: column;
  font-size: 14.500px;
  line-height: 20px;
  letter-spacing: -0.3px;
}
.lang {
  width: 32px;
  margin-left: 22px;
  padding-bottom: 1px;
  align-items: center;
}
.wifi {
  margin-left: 21px;
  margin-bottom: 2px;
}
.sound {
  margin-left: 9px;
  margin-bottom: 1px;
}
.battery {
  margin-left: 9px;
  margin-bottom: 2px;
}
.clock {
  width: 89px;
  padding-bottom: 2px;
  font-size: 14.800px;
  letter-spacing: -0.1px;
  align-items: flex-end;
}
.bell {
  margin-left: 11px;
  margin-right: 27px;
}
</style>
